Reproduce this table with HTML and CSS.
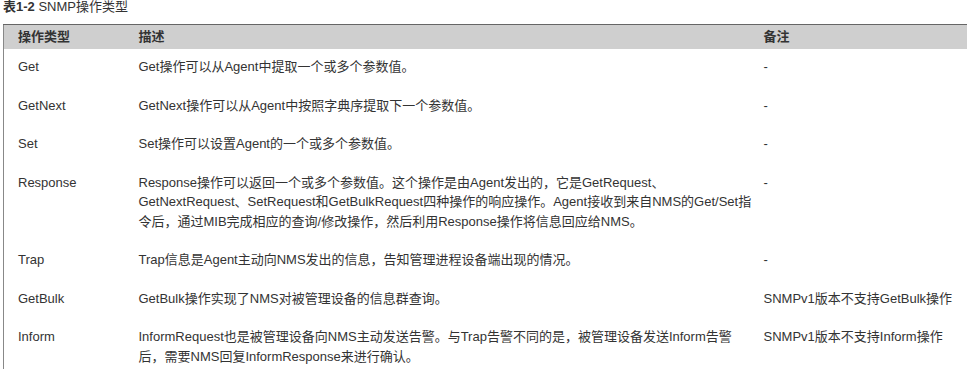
FILE: index.html
```html
<!DOCTYPE html>
<html lang="zh-CN">
<head>
<meta charset="utf-8">
<title>SNMP操作类型</title>
<link rel="stylesheet" href="styles.css">
</head>
<body>
<p class="caption"><b>表1-2</b> SNMP操作类型</p>
<table class="tbl">
  <colgroup>
    <col class="c1"><col class="c2"><col class="c3">
  </colgroup>
  <thead>
    <tr><th>操作类型</th><th>描述</th><th>备注</th></tr>
  </thead>
  <tbody>
    <tr><td>Get</td><td>Get操作可以从Agent中提取一个或多个参数值。</td><td>-</td></tr>
    <tr><td>GetNext</td><td>GetNext操作可以从Agent中按照字典序提取下一个参数值。</td><td>-</td></tr>
    <tr><td>Set</td><td>Set操作可以设置Agent的一个或多个参数值。</td><td>-</td></tr>
    <tr><td>Response</td><td>Response操作可以返回一个或多个参数值。这个操作是由Agent发出的，它是GetRequest、GetNextRequest、SetRequest和GetBulkRequest四种操作的响应操作。Agent接收到来自NMS的Get/Set指令后，通过MIB完成相应的查询/修改操作，然后利用Response操作将信息回应给NMS。</td><td>-</td></tr>
    <tr><td>Trap</td><td>Trap信息是Agent主动向NMS发出的信息，告知管理进程设备端出现的情况。</td><td>-</td></tr>
    <tr><td>GetBulk</td><td>GetBulk操作实现了NMS对被管理设备的信息群查询。</td><td>SNMPv1版本不支持GetBulk操作</td></tr>
    <tr><td>Inform</td><td>InformRequest也是被管理设备向NMS主动发送告警。与Trap告警不同的是，被管理设备发送Inform告警后，需要NMS回复InformResponse来进行确认。</td><td>SNMPv1版本不支持Inform操作</td></tr>
  </tbody>
</table>
</body>
</html>
```
FILE: styles.css
```css
html, body {
  margin: 0;
  padding: 0;
  background: #fff;
  overflow: hidden;
}
body {
  font-family: "Liberation Sans", Arial, "Noto Sans CJK SC", sans-serif;
  font-size: 13px;
  color: #333;
}
.caption {
  margin: 0 0 11px 3px;
  line-height: 13px;
  height: 13px;
  color: #333;
}
.caption b {
  font-weight: bold;
}
.tbl {
  margin-left: 3px;
  width: 964px;
  border-collapse: collapse;
  table-layout: fixed;
  border-top: 1px solid #666;
  border-left: 1px solid #888;
}
.c1 { width: 121px; }
.c2 { width: 628px; }
.c3 { width: auto; }
.tbl th {
  background: #cfcfcf;
  text-align: left;
  font-weight: bold;
  line-height: 19.5px;
  padding: 2px 14px 2.5px 14px;
  color: #333;
}
.tbl td {
  vertical-align: top;
  line-height: 19.5px;
  padding: 8px 14px 11px 14px;
  color: #333;
}
.tbl th:nth-child(2),
.tbl td:nth-child(2) {
  padding-right: 0;
}
.tbl th:nth-child(3),
.tbl td:nth-child(3) {
  padding-left: 11px;
}
```
